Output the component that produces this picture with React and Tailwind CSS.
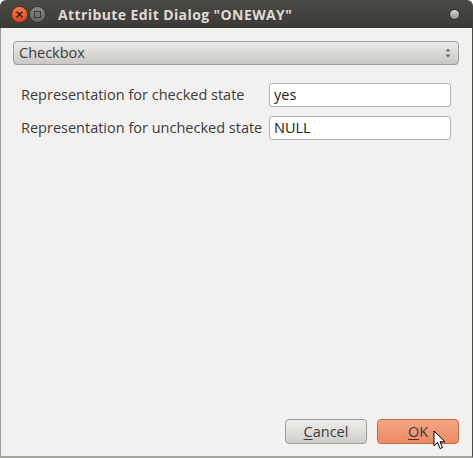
import React from "react";

const font = { fontFamily: '"Open Sans", "DejaVu Sans", sans-serif' };

const Cursor = () => (
  <svg width="14" height="21" viewBox="0 0 14 21" className="absolute left-[433px] top-[430px]">
    <path d="M1 1 L1 16 L4.5 12.5 L7 18.5 L9.5 17.5 L7 11.8 L12 11.8 Z" fill="#fff" stroke="#000" strokeWidth="1" strokeLinejoin="round" />
  </svg>
);

const Field = ({ label, value }) => (
  <div className="flex items-center h-[24px]">
    <span className="w-[248px] text-[14.5px] text-[#3c3c3c] whitespace-nowrap">{label}</span>
    <div className="flex-1 h-[24px] bg-white border border-[#b4b2ad] rounded-[3px] flex items-center px-[4px] text-[14.5px] text-[#222]">
      {value}
    </div>
  </div>
);

export default function App() {
  return (
    <div className="relative w-[473px] h-[458px] bg-white" style={font}>
      <div className="w-full h-full flex flex-col">
        {/* title bar */}
        <div className="h-[28px] rounded-t-[6px] bg-gradient-to-b from-[#4a4944] to-[#3c3b37] flex items-center px-[11px] shrink-0">
          <div className="w-[17px] h-[17px] rounded-full bg-gradient-to-b from-[#f27a4c] to-[#d9471d] border border-[#6e2a12] flex items-center justify-center">
            <svg width="7" height="7" viewBox="0 0 7 7">
              <path d="M1 1 L6 6 M6 1 L1 6" stroke="#3a1a0c" strokeWidth="1.6" strokeLinecap="round" />
            </svg>
          </div>
          <div className="ml-[1px] w-[17px] h-[17px] rounded-full bg-gradient-to-b from-[#8a8984] to-[#64635f] border border-[#33322e] flex items-center justify-center">
            <div className="w-[7px] h-[7px] border border-[#3a3935]" />
          </div>
          <span className="ml-[12px] text-[14px] font-bold text-[#dfdbd2] tracking-[0.4px]">
            Attribute Edit Dialog "ONEWAY"
          </span>
          <div className="ml-auto mr-[2px] w-[11px] h-[11px] rounded-full bg-gradient-to-b from-[#d8d7d2] to-[#8d8c87] border border-[#2b2a27]" />
        </div>
        {/* body */}
        <div className="flex-1 flex flex-col bg-[#f2f1f0] border-l border-l-[#9c9b97] border-r border-r-[#4a4944] border-b-2 border-b-[#a5a4a0] pl-[12px] pr-[13px] pt-[13px] pb-[12px]">
          <div className="h-[24px] rounded-[4px] border border-[#9d9c98] bg-gradient-to-b from-[#ecebe9] to-[#c9c8c5] flex items-center pl-[5px] pr-[7px] text-[14.5px] text-[#3c3c3c]">
            <span>Checkbox</span>
            <svg width="6" height="12" viewBox="0 0 6 12" className="ml-auto">
              <path d="M0.5 4.5 L3 1.5 L5.5 4.5 Z M0.5 7.5 L3 10.5 L5.5 7.5 Z" fill="#6a6a6a" />
            </svg>
          </div>
          <div className="mt-[18px] px-[8px] flex flex-col gap-[9px]">
            <Field label="Representation for checked state" value="yes" />
            <Field label="Representation for unchecked state" value="NULL" />
          </div>
          <div className="mt-auto flex justify-end gap-[10px]">
            <button className="w-[82px] h-[25px] rounded-[4px] border border-[#9d9c98] bg-gradient-to-b from-[#efeeec] to-[#cfceca] text-[14.5px] text-[#3c3c3c]">
              <span className="underline underline-offset-2">C</span>ancel
            </button>
            <button className="w-[82px] h-[25px] rounded-[4px] border border-[#c5694a] bg-gradient-to-b from-[#f3a585] to-[#ec8a62] text-[14.5px] text-[#3c3c3c]">
              <span className="underline underline-offset-2">O</span>K
            </button>
          </div>
        </div>
      </div>
      <Cursor />
    </div>
  );
}
